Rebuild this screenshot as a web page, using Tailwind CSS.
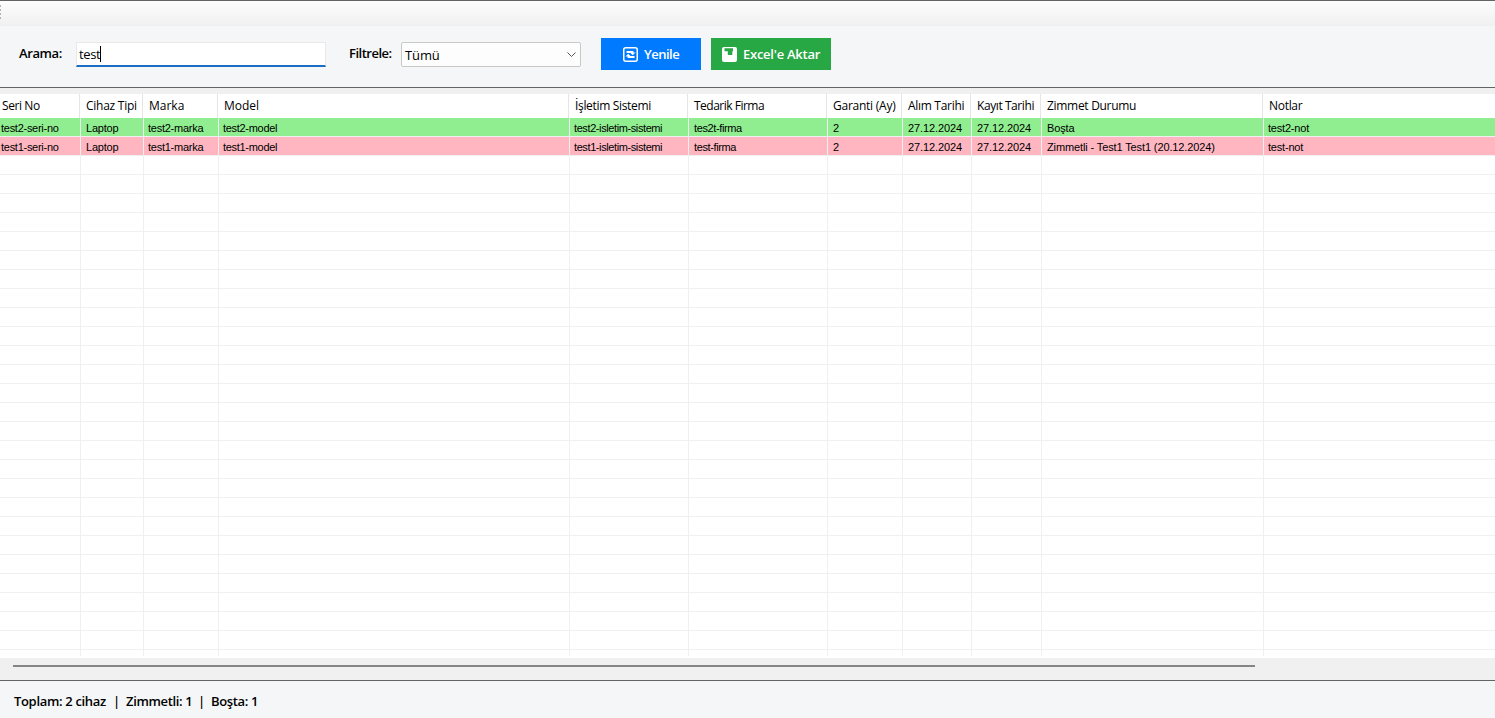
<!DOCTYPE html>
<html lang="tr">

<head>
    <meta charset="UTF-8">
    <meta name="viewport" content="width=device-width, initial-scale=1.0">
    <title>Cihaz Listesi</title>
    <script src="https://cdn.jsdelivr.net/npm/@tailwindcss/browser@4"></script>
</head>

<body class="flex h-screen flex-col overflow-hidden bg-[#f0f0f0] font-['Open_Sans','Noto_Sans',sans-serif] text-xs text-black">
    <!-- Empty tool strip -->
    <div class="h-[26px] shrink-0 border-t border-[#646464] bg-linear-to-b from-[#fdfdfd] to-[#f0f0f0] pt-1">
        <div class="flex w-px flex-col gap-0.5">
            <i class="h-0.5 bg-[#b4b4b4]"></i>
            <i class="h-0.5 bg-[#b4b4b4]"></i>
            <i class="h-0.5 bg-[#b4b4b4]"></i>
            <i class="h-0.5 bg-[#b4b4b4]"></i>
        </div>
    </div>

    <!-- Search and filter -->
    <header class="flex h-[62px] shrink-0 items-start border-b border-[#646464] bg-[#f5f6f8] pt-3 pl-[19px] text-[13px]">
        <label for="search" class="mt-[7px] w-[57px] font-semibold tracking-[-0.4px]">Arama:</label>
        <div class="mt-1 flex h-[25px] w-[250px] items-center border border-b-2 border-[#e8e8e8] border-b-[#1a6fc4] bg-white pl-0.5">
            <span id="search" class="pt-0.5 tracking-[-0.35px]">test</span>
            <i class="h-4 w-px bg-black"></i>
        </div>
        <label class="mt-[7px] ml-[23px] w-[52px] font-semibold tracking-[-0.5px]">Filtrele:</label>
        <div class="mt-1 flex h-[25px] w-[180px] items-center justify-between rounded-xs border border-[#c8c8c8] bg-[#fdfdfd] pr-1 pl-[3px]">
            <span class="pt-0.5 tracking-[-0.1px]">Tümü</span>
            <svg class="h-[5px] w-[9px]" viewBox="0 0 9 5" fill="none" stroke="#555" stroke-width="1">
                <path d="M.5.5l4 4 4-4" />
            </svg>
        </div>
        <button class="ml-5 flex h-8 w-[100px] items-center bg-[#007bff] pl-[22px] font-semibold text-white">
            <svg class="mr-1.5 size-[15px]" viewBox="0 0 15 15" fill="none" stroke="#fff">
                <rect x=".75" y=".75" width="13.5" height="13.5" rx="2" stroke-width="1.5" />
                <path d="M3.500 5H9.500V6.500M11.500 10H5.500V8.500" stroke-width="1.800" />
                <path d="M7 5.500h5.500L9.700 8.200zM2.500 9.500h5.500L5.200 6.800z" fill="#fff" stroke="none" />
            </svg>
            <span class="pt-0.5 tracking-[-0.5px]">Yenile</span>
        </button>
        <button class="ml-2.5 flex h-8 w-[120px] items-center bg-[#28a745] pl-[11px] font-semibold text-white">
            <svg class="mr-1.5 size-[15px]" viewBox="0 0 15 15">
                <rect width="15" height="15" rx="2" fill="#fff" />
                <path d="M2.500 1.200H11V4.200H10.300V8H5.800V4.200H2.500z" fill="#28a745" />
            </svg>
            <span class="pt-0.5 whitespace-nowrap tracking-[-0.25px]">Excel'e Aktar</span>
        </button>
    </header>

    <!-- Device list -->
    <main class="mt-1.5 h-[564px] shrink-0 overflow-hidden bg-white">
        <div class="grid h-6 grid-cols-[80px_63px_75px_351px_119px_139px_75px_69px_70px_222px_1fr] leading-6 whitespace-nowrap *:border-r *:border-[#e5e5e5] *:pl-1.5">
            <div class="pl-0.5! tracking-[-0.4px]">Seri No</div>
            <div class="tracking-[-0.25px]">Cihaz Tipi</div>
            <div>Marka</div>
            <div>Model</div>
            <div class="tracking-[-0.33px]">İşletim Sistemi</div>
            <div class="tracking-[-0.5px]">Tedarik Firma</div>
            <div class="tracking-[-0.25px]">Garanti (Ay)</div>
            <div class="tracking-[-0.3px]">Alım Tarihi</div>
            <div class="tracking-[-0.42px]">Kayıt Tarihi</div>
            <div class="tracking-[-0.3px]">Zimmet Durumu</div>
            <div class="border-r-0! tracking-[-0.3px]">Notlar</div>
        </div>
        <div id="rows" class="h-[538px] overflow-hidden font-['Liberation_Sans',sans-serif] text-[11px]"></div>
    </main>

    <!-- Horizontal scrollbar -->
    <div class="h-[22px] shrink-0 pt-[7px] pl-[13px]">
        <div class="h-0.5 w-[1242px] bg-[#858585]"></div>
    </div>

    <footer class="flex flex-1 items-center border-t border-[#646464] bg-[#f5f6f8] pt-1 pl-3.5 text-[13px] font-semibold">
        <span class="w-[99px] tracking-[-0.33px]">Toplam: 2 cihaz</span>
        <span class="w-[13px]">|</span>
        <span class="w-[72px] tracking-[-0.35px]">Zimmetli: 1</span>
        <span class="w-[13px]">|</span>
        <span class="tracking-[-0.35px]">Boşta: 1</span>
    </footer>

    <script>
        const devices = [
            ['test2-seri-no', 'Laptop', 'test2-marka', 'test2-model', 'test2-isletim-sistemi', 'tes2t-firma', '2', '27.12.2024', '27.12.2024', 'Boşta', 'test2-not'],
            ['test1-seri-no', 'Laptop', 'test1-marka', 'test1-model', 'test1-isletim-sistemi', 'test-firma', '2', '27.12.2024', '27.12.2024', 'Zimmetli - Test1 Test1 (20.12.2024)', 'test-not']
        ];
        const cellClasses = [
            'pl-px tracking-[-0.27px]',
            'pl-[5px] tracking-[-0.2px]',
            'pl-1 tracking-[-0.25px]',
            'pl-1 tracking-[-0.3px]',
            'pl-1 tracking-[-0.4px]',
            'pl-[5px] tracking-[-0.38px]',
            'pl-[5px]',
            'pl-[5px] tracking-[-0.1px]',
            'pl-[5px] tracking-[-0.1px]',
            'pl-[5px] tracking-[-0.12px]',
            'border-r-0! pl-1 tracking-[-0.2px]'
        ];
        const rows = document.getElementById('rows');

        for (let i = 0; i < 29; i++) {
            const device = devices[i] || Array(11).fill('');
            const row = document.createElement('div');
            row.className = 'grid h-[19px] grid-cols-[81px_63px_75px_351px_119px_139px_75px_69px_70px_222px_1fr] border-b border-[#f0f0f0] leading-[20px] whitespace-nowrap *:h-[18px] *:border-r *:border-[#f0f0f0]';
            if (device[0]) {
                // free devices are green, assigned ones pink
                row.classList.add(device[9] === 'Boşta' ? 'bg-[#90ee90]' : 'bg-[#ffb6c1]');
            }
            device.forEach((text, col) => {
                const cell = document.createElement('div');
                cell.className = cellClasses[col];
                cell.textContent = text;
                row.appendChild(cell);
            });
            rows.appendChild(row);
        }
    </script>
</body>

</html>
